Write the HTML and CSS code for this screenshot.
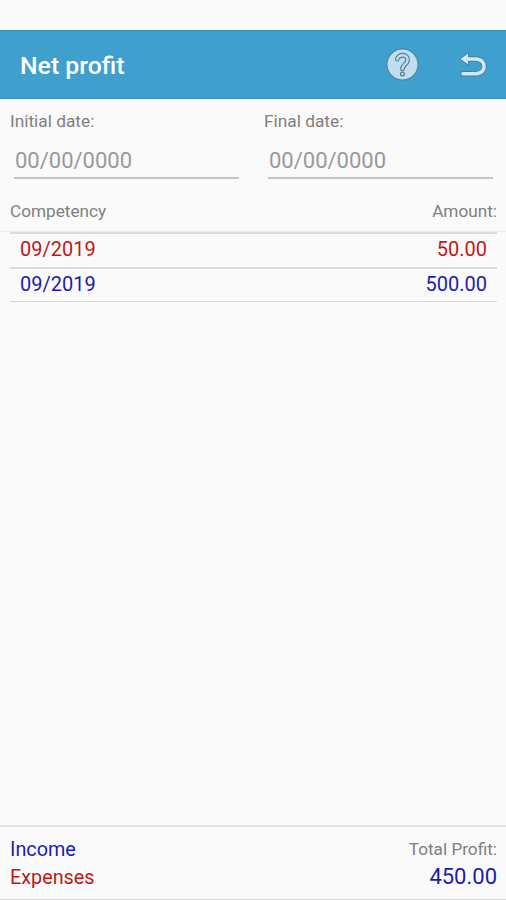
FILE: index.html
```
<!DOCTYPE html>
<html lang="en">
<head>
    <meta charset="UTF-8">
    <meta name="viewport" content="width=device-width, initial-scale=1.0">
    <title>Net profit</title>
    <link rel="stylesheet" href="styles.css">
</head>
<body>
    <div class="header">
        <h1>Net profit</h1>
        <svg class="icon" width="34" height="34" viewBox="0 0 34 34">
            <circle cx="16.5" cy="16.5" r="15.6" fill="#bfdff1" stroke="#4b87a8" stroke-width="1.2"/>
            <path class="outline" d="M11.2 11.2C12 5.8 22 5.8 21.6 12C21.4 16.5 16.4 16.5 16.4 21"/>
            <path class="fill" d="M11.2 11.2C12 5.8 22 5.8 21.6 12C21.4 16.5 16.4 16.5 16.4 21"/>
            <circle cx="16.4" cy="26" r="1.9" fill="#bfdff1" stroke="#587f96" stroke-width="1.3"/>
        </svg>
        <svg class="icon" width="34" height="34" viewBox="0 0 34 34">
            <path class="back-outline" d="M10 11H19.5C31 11 31 25.8 19.5 25.8H7"/>
            <path d="M3.8 10.8L13 4.5L12 10.8L13 17.1Z" fill="#cdeafa" stroke="#4b8099" stroke-width="1"/>
            <path class="back" d="M9 11H19.5C31 11 31 25.8 19.5 25.8H7"/>
        </svg>
    </div>

    <div class="dates">
        <div class="field">
            <label for="initial">Initial date:</label>
            <input type="text" id="initial" placeholder="00/00/0000">
        </div>
        <div class="field">
            <label for="final">Final date:</label>
            <input type="text" id="final" placeholder="00/00/0000">
        </div>
    </div>

    <div class="list-title">
        <span>Competency</span>
        <span>Amount:</span>
    </div>
    <div class="list">
        <div class="item expense"><span>09/2019</span><span>50.00</span></div>
        <div class="item income"><span>09/2019</span><span>500.00</span></div>
    </div>

    <div class="footer">
        <div class="legend">
            <div class="income">Income</div>
            <div class="expense">Expenses</div>
        </div>
        <div class="total">
            <div class="total-label">Total Profit:</div>
            <div class="total-value income">450.00</div>
        </div>
    </div>
</body>
</html>
```
FILE: styles.css
```
* {
    box-sizing: border-box;
}

body {
    margin: 0;
    padding-top: 30px;
    height: 100vh;
    display: flex;
    flex-direction: column;
    font-family: Roboto, sans-serif;
    background-color: #fafafa;
    color: #808080;
    overflow: hidden;
}

.header {
    display: flex;
    align-items: center;
    height: 69px;
    padding: 0 16px 0 20px;
    background-color: #3f9fcd;
    border-top: 1px solid #358fba;
    border-bottom: 1px solid #358fba;
}

.header h1 {
    flex: 1;
    margin: 0;
    padding-top: 1px;
    font-size: 24.8px;
    font-weight: 500;
    color: #ffffff;
}

.icon {
    margin-left: 36px;
    fill: none;
    stroke-linecap: round;
    stroke-linejoin: round;
}

.outline {
    stroke: #587f96;
    stroke-width: 4.8;
}

.fill {
    stroke: #bfdff1;
    stroke-width: 2.4;
}

.back-outline {
    stroke: #4b8099;
    stroke-width: 5.4;
}

.back {
    stroke: #cdeafa;
    stroke-width: 3.6;
}

.dates {
    display: flex;
    gap: 20px;
    height: 97px;
    padding: 11px 8px 0 10px;
}

.field {
    flex: 1;
    min-width: 0;
}

.field label {
    display: block;
    font-size: 17.3px;
    line-height: 22px;
}

.field input {
    display: block;
    width: 225px;
    height: 35px;
    margin: 12px 0 0 4px;
    padding: 0 0 1px 1px;
    border: none;
    border-bottom: 2px solid #c4c4c4;
    background: transparent;
    font-family: inherit;
    font-size: 22px;
    outline: none;
}

.field input::placeholder {
    color: #999999;
}

.list-title {
    display: flex;
    justify-content: space-between;
    height: 36px;
    padding: 4px 9px 0 10px;
    border-bottom: 1px solid #ededed;
    font-size: 17.2px;
    line-height: 22px;
}

.list {
    flex: 1;
    margin: 0 9px 0 10px;
    border-top: 2px solid #dcdcdc;
}

.item {
    display: flex;
    justify-content: space-between;
    height: 33px;
    padding: 0 10px;
    border-bottom: 1px solid #d8d8d8;
    font-size: 20px;
    line-height: 30px;
}

.item:first-child {
    height: 35px;
    border-bottom: 2px solid #dcdcdc;
    line-height: 31px;
}

.income {
    color: #1c1cb0;
}

.expense {
    color: #c01818;
}

.footer {
    display: flex;
    justify-content: space-between;
    height: 75px;
    padding: 8px 9px 0 10px;
    border-top: 2px solid #e4e4e4;
    border-bottom: 1px solid #d8d8d8;
}

.legend {
    padding-top: 1px;
    font-size: 19.8px;
    line-height: 28px;
}

.total {
    text-align: right;
}

.total-label {
    font-size: 17.2px;
    line-height: 28px;
}

.total-value {
    font-size: 22px;
    line-height: 27px;
}
```
